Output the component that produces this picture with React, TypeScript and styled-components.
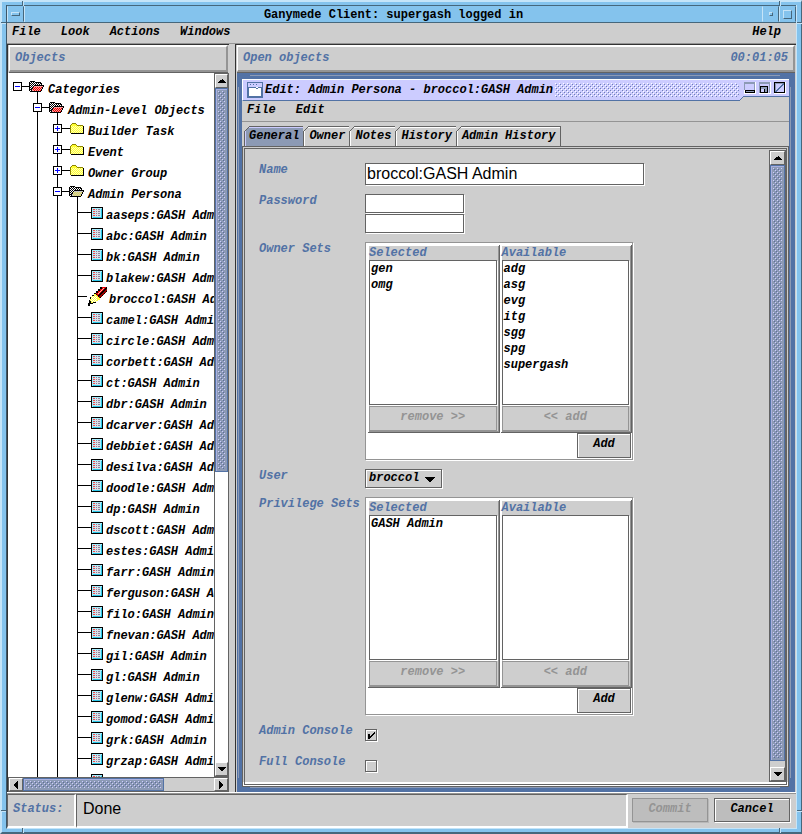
import React, { useState } from "react";
import styled, { createGlobalStyle, css } from "styled-components";

const C = {
  gray: "#cecece",
  mid: "#949494",
  dark: "#636363",
  blue: "#5272a5",
  steel: "#8c9ab5",
  lavender: "#ccccff",
  sky: "#84c3ed",
  skyLight: "#c5e4f8",
  skyDark: "#46677c",
};

const Global = createGlobalStyle`
  *, *::before, *::after { box-sizing: border-box; }
  html, body { margin: 0; background: ${C.gray}; }
  body, button, select, input {
    font: italic bold 12px/15px "Liberation Mono", "Courier New", monospace;
    color: #000;
  }
  button, select, input { margin: 0; padding: 0; border-radius: 0; outline-offset: -2px; }
  ul { list-style: none; margin: 0; padding: 0; }
  svg { display: block; flex: none; shape-rendering: crispEdges; }
`;

const bumps = (base: string, light: string, dark: string) => css`
  background:
    conic-gradient(at 1px 1px, transparent 75%, ${light} 0) 0 0 / 4px 4px,
    conic-gradient(at 1px 1px, transparent 75%, ${light} 0) 2px 2px / 4px 4px,
    conic-gradient(at 1px 1px, transparent 75%, ${dark} 0) 1px 1px / 4px 4px,
    conic-gradient(at 1px 1px, transparent 75%, ${dark} 0) 3px 3px / 4px 4px,
    ${base};
`;

/* ---------- desktop window ---------- */

const Shell = styled.div`
  position: relative;
  display: flex;
  flex-direction: column;
  height: 100vh;
  min-height: 400px;
  padding: 3px 4px 3px 4px;
  border: 2px solid;
  border-color: ${C.skyLight} ${C.skyDark} ${C.skyDark} ${C.skyLight};
  border-right-width: 1px;
  background: ${C.sky};
`;

const Notch = styled.i<{ $side: "top" | "bottom" | "left" | "right"; $end?: boolean }>`
  position: absolute;
  background: ${C.skyDark};
  ${(p) =>
    p.$side === "top" || p.$side === "bottom"
      ? css`
          width: 2px;
          height: 5px;
          border-right: 1px solid ${C.skyLight};
          ${p.$side}: -1px;
          ${p.$end ? "right: 20px" : "left: 20px"};
        `
      : css`
          width: 5px;
          height: 2px;
          border-bottom: 1px solid ${C.skyLight};
          ${p.$side}: -1px;
          ${p.$end ? "bottom: 20px" : "top: 20px"};
        `}
`;

const Client = styled.div`
  display: flex;
  flex-direction: column;
  flex: 1;
  min-height: 0;
  border: 1px solid;
  border-top: 0;
  border-color: ${C.skyDark} ${C.skyLight} ${C.skyLight} #3d5668;
  background: ${C.gray};
`;

const WindowBar = styled.header`
  display: flex;
  align-items: stretch;
  height: 18px;
  border-top: 1px solid ${C.skyDark};
  border-bottom: 1px solid ${C.skyDark};
  background: ${C.sky};
`;

const WindowTitle = styled.h1`
  flex: 1;
  margin: 0;
  text-align: center;
  font: bold 12px/18px "Liberation Mono", "Courier New", monospace;
  border-left: 1px solid ${C.skyLight};
  white-space: nowrap;
  overflow: hidden;
`;

const BarButton = styled.button`
  width: 17px;
  border: 1px solid;
  border-color: ${C.sky} ${C.skyDark} ${C.sky} ${C.skyLight};
  background: ${C.sky};
  display: flex;
  align-items: center;
  justify-content: center;
`;

const Glyph = styled.i<{ $w: number; $h: number }>`
  width: ${(p) => p.$w}px;
  height: ${(p) => p.$h}px;
  border: 1px solid;
  border-color: ${C.skyLight} ${C.skyDark} ${C.skyDark} ${C.skyLight};
`;

/* ---------- menus ---------- */

const MenuBar = styled.nav`
  display: flex;
  height: 21px;
  padding-right: 5px;
  border-bottom: 1px solid ${C.mid};
  background: ${C.gray};
`;

const MenuItem = styled.button<{ $push?: boolean }>`
  padding: 1px 10px 3px;
  border: 0;
  background: none;
  ${(p) => p.$push && "margin-left: auto;"}
  &:first-child { padding-left: 5px; }
`;

/* ---------- panels ---------- */

const Main = styled.main`
  display: grid;
  grid-template-columns: minmax(160px, 222px) 6px minmax(0, 1fr);
  flex: 1;
  min-height: 0;
  border-bottom: 1px solid #fff;
`;

const Pane = styled.section`
  display: flex;
  flex-direction: column;
  min-width: 0;
  min-height: 0;
  border-top: 1px solid #333;
  border-left: 1px solid #333;
`;

const PaneHead = styled.header`
  display: flex;
  justify-content: space-between;
  margin: 0 1px 1px;
  height: 27px;
  padding: 4px 5px;
  border: 2px solid;
  border-color: #fff ${C.mid} ${C.mid} #fff;
  border-left-width: 1px;
  box-shadow: 0 1px 0 ${C.dark};
  color: ${C.blue};
`;

const PaneTitle = styled.h2`
  margin: 0;
  font: inherit;
`;

const TreeArea = styled.div`
  display: grid;
  grid-template: minmax(0, 1fr) 15px / minmax(0, 1fr) 15px;
  flex: 1;
  min-height: 0;
  background: #fff;
`;

/* ---------- scroll bars ---------- */

const BarTrack = styled.div<{ $across?: boolean }>`
  display: flex;
  flex-direction: ${(p) => (p.$across ? "row" : "column")};
  ${(p) => p.$across && "grid-column: 1 / -1;"}
  min-height: 0;
  border: 1px solid ${C.dark};
  background: ${C.gray};
`;

const Arrow = styled.button<{ $across?: boolean }>`
  display: flex;
  align-items: center;
  justify-content: center;
  align-self: stretch;
  flex: 0 0 14px;
  border: 1px solid;
  border-color: #fff ${C.dark} ${C.dark} #fff;
  background: ${C.gray};
`;

const Groove = styled.div<{ $across?: boolean; $white?: boolean }>`
  flex: 1;
  min-height: 0;
  display: flex;
  flex-direction: ${(p) => (p.$across ? "row" : "column")};
  background: ${(p) => (p.$white ? "#fff" : C.gray)};
`;

const Thumb = styled.div<{ $size: number }>`
  flex: 0 0 ${(p) => p.$size}%;
  border: 1px solid ${C.blue};
  padding: 2px;
  background: ${C.steel};
  box-shadow: inset 1px 1px 0 #a9b0e0;
  display: flex;
  &::before {
    content: "";
    flex: 1;
    ${bumps(C.steel, "#ccccff", "#5c6c9c")}
  }
`;

const arrows: Record<string, string> = {
  up: "M4 2h1v1h1v1h1v1h1v1H0V5h1V4h1V3h2z",
  down: "M0 2h8v1H7v1H6v1H5v1H3V5H2V4H1V3H0z",
  left: "M6 0v8H5V7H4V6H3V5H2V3h1V2h1V1h1V0z",
  right: "M2 0v8h1V7h1V6h1V5h1V3H5V2H4V1H3V0z",
};

function ScrollBar(props: { across?: boolean; size: number; white?: boolean; label: string }) {
  const [a, b] = props.across ? ["left", "right"] : ["up", "down"];
  return (
    <BarTrack $across={props.across} role="group" aria-label={props.label}>
      <Arrow aria-label={"Scroll " + a}>
        <svg width="8" height="8" viewBox="0 0 8 8"><path d={arrows[a]} /></svg>
      </Arrow>
      <Groove $across={props.across} $white={props.white}>
        <Thumb $size={props.size} />
      </Groove>
      <Arrow aria-label={"Scroll " + b}>
        <svg width="8" height="8" viewBox="0 0 8 8"><path d={arrows[b]} /></svg>
      </Arrow>
    </BarTrack>
  );
}

/* ---------- tree ---------- */

const Tree = styled.ul`
  min-width: 0;
  overflow: hidden;
  padding: 4px 0 0 5px;
`;

const TreeRow = styled.li`
  display: flex;
  height: 21px;
  white-space: nowrap;
`;

const Toggle = styled.button`
  border: 0;
  background: none;
  flex: none;
`;

const TreeLabel = styled.span<{ $gap: number }>`
  padding: 6px 0 0 ${(p) => p.$gap}px;
`;

type Kind = "red" | "open" | "closed" | "leaf" | "edit";
interface Node { depth: number; kind: Kind; label: string; open?: boolean }

const people =
  "aaseps abc bk blakew broccol camel circle corbett ct dbr dcarver debbiet desilva doodle dp dscott estes farr ferguson filo fnevan gil gl glenw gomod grk grzap".split(" ");

const nodes: Node[] = [
  { depth: 0, kind: "red", label: "Categories", open: true },
  { depth: 1, kind: "red", label: "Admin-Level Objects", open: true },
  { depth: 2, kind: "closed", label: "Builder Task" },
  { depth: 2, kind: "closed", label: "Event" },
  { depth: 2, kind: "closed", label: "Owner Group" },
  { depth: 2, kind: "open", label: "Admin Persona", open: true },
  ...people.map((p): Node => ({
    depth: 3,
    kind: p === "broccol" ? "edit" : "leaf",
    label: p + ":GASH Admin",
  })),
  { depth: 3, kind: "leaf", label: "" },
];

function Dots({ x, y, w, h, fill }: { x: number; y: number; w: number; h: number; fill: string }) {
  let d = "";
  for (let r = 0; r < h; r++)
    for (let c = 0; c < w; c++) if ((r + c) % 2 === 0) d += `M${x + c} ${y + r}h1v1h-1z`;
  return <path d={d} fill={fill} />;
}

function OpenFolder({ color, light }: { color: string; light: string }) {
  return (
    <svg width="16" height="21" viewBox="0 0 16 21">
      <path d="M8 15h1v6H8z" />
      <path d="M1 5h1V4h4v1h1v1h5v3H1z" fill="#fff" />
      <Dots x={0} y={5} w={12} h={9} fill="#000" />
      <path d="M1 4h5v1H1zM0 5h1v9H0zM6 5h6v1H6zM12 6h1v3h-1z" />
      <path d="M5 9h10v1h-1v2h-1v2h-1v1H2v-1h1v-2h1v-2h1z" fill={light} />
      <Dots x={4} y={10} w={9} h={4} fill={color} />
      <path d="M5 8h10v1H5zM4 9h1v1H4zM3 10h1v2H3zM2 12h1v2H2zM1 14h11v1H1zM14 9h1v1h-1zM13 10h1v2h-1zM12 12h1v2h-1z" />
    </svg>
  );
}

function ClosedFolder() {
  return (
    <svg width="16" height="21" viewBox="0 0 16 21">
      <path d="M0 9h2v1H0z" />
      <path d="M2 5h1V4h4v1h1v1h6v8H2z" fill="#ffff31" />
      <Dots x={2} y={7} w={12} h={7} fill="#ffffb5" />
      <path d="M3 4h4v1H3zM2 5h1v1H2zM7 5h1v1H7zM1 6h1v8H1zM8 6h6v1H8z" fill="#8c8400" />
      <path d="M2 14h13v1H2zM14 7h1v8h-1z" />
    </svg>
  );
}

function Leaf() {
  return (
    <svg width="12" height="21" viewBox="0 0 12 21">
      <path d="M0 4h12v12H0z" />
      <path d="M1 5h10v10H1z" fill="#a5efff" />
      <path d="M2 14h9v1H2zM10 6h1v9h-1z" fill="#29c6e7" />
      <path d="M4 6h5v8H4z" fill="#dedee7" />
      <path d="M2 6h2v1H2zM2 8h2v1H2zM2 10h2v1H2zM2 12h2v1H2z" fill="#ff4242" />
      <path
        d="M5 6h1v1H5zM7 6h2v1H7zM5 8h1v1H5zM7 8h2v1H7zM5 10h1v1H5zM7 10h2v1H7zM5 12h1v1H5zM7 12h2v1H7z"
        fill="#8c849c"
      />
    </svg>
  );
}

function Pencil() {
  return (
    <svg width="21" height="21" viewBox="0 0 21 21">
      <path d="M0 19h1v-3h1v-3h1v-3h2V8h2V6h2V4h2V2h2V0h7v5h-2v2h-2v2h-2v2h-2v2h-2v2H9v1H6v1H3v2z" />
      <path d="M5 9h2V7h2v1h2v2h2v3h-2v1H9v1H6v1H4v-2H3v-2h1v-2h1z" fill="#ffff42" />
      <Dots x={4} y={9} w={6} h={6} fill="#fff" />
      <path d="M9 6h2V4h2V2h2V0h4v1h-1v1h-1v1h-1v1h-1v1h-1v1h-1v1h-1v1h-1v1h-1V7H9z" fill="#e70000" />
      <path d="M12 9h1V8h1V7h1V6h1V5h1V4h1V3h1V2h1v2h-1v2h-2v2h-2v2h-2v1h-1z" fill="#940000" />
      <path d="M11 6h1V5h1V4h1V3h1V2h1V1h1v1h-1v1h-1v1h-1v1h-1v1h-1v1h-1z" fill="#ffb5b5" />
    </svg>
  );
}

function TreeIcon({ kind }: { kind: Kind }) {
  if (kind === "red") return <OpenFolder color="#e70000" light="#ff9c9c" />;
  if (kind === "open") return <OpenFolder color="#e7de4a" light="#c6c6c6" />;
  if (kind === "closed") return <ClosedFolder />;
  if (kind === "edit") return <Pencil />;
  return <Leaf />;
}

function Row({ node }: { node: Node }) {
  const leaf = node.depth === 3;
  const w = node.kind === "edit" ? 14 : leaf ? 18 : 16;
  const cell = (
    <svg width={w} height="21" viewBox={`0 0 ${w} 21`}>
      {node.depth > 0 && <path d="M4 0h1v21H4z" />}
      <path d={`M4 9h${w - 4}v1H4z`} />
      {!leaf && (
        <>
          <path d="M0 5h9v9H0z" />
          <path d="M1 6h7v7H1z" fill="#fff" />
          <path d={node.open ? "M2 9h5v1H2z" : "M2 9h5v1H2zM4 7h1v5H4z"} fill="#00f" />
        </>
      )}
    </svg>
  );
  return (
    <TreeRow>
      {Array.from({ length: node.depth }, (_, k) => (
        <svg key={k} width="20" height="21" viewBox="0 0 20 21">{k > 0 && <path d="M4 0h1v21H4z" />}</svg>
      ))}
      {leaf ? cell : <Toggle aria-label={(node.open ? "Collapse " : "Expand ") + node.label}>{cell}</Toggle>}
      <TreeIcon kind={node.kind} />
      <TreeLabel $gap={node.kind === "edit" ? 1 : 3}>{node.label}</TreeLabel>
    </TreeRow>
  );
}

/* ---------- internal frame ---------- */

const Frame = styled.article`
  display: flex;
  flex-direction: column;
  flex: 1;
  min-height: 0;
  margin: 0 1px;
  padding: 6px 6px 5px 5px;
  background:
    linear-gradient(${C.steel} 0 0) 13px 2px / calc(100% - 28px) 1px no-repeat,
    linear-gradient(${C.steel} 0 0) 13px calc(100% - 4px) / calc(100% - 28px) 1px no-repeat,
    linear-gradient(${C.steel} 0 0) 1px 14px / 1px calc(100% - 28px) no-repeat,
    linear-gradient(${C.steel} 0 0) calc(100% - 4px) 14px / 1px calc(100% - 28px) no-repeat,
    ${C.blue};
`;

const FrameBar = styled.header`
  display: flex;
  align-items: flex-start;
  height: 22px;
  background: ${C.gray};
`;

const FrameTitle = styled.div`
  display: flex;
  align-items: center;
  flex: 1;
  min-width: 0;
  height: 22px;
  padding: 0 0 1px 4px;
  gap: 2px;
  border: solid #fff;
  border-width: 1px 0 1px 1px;
  border-bottom-color: ${C.blue};
  background: ${C.lavender};
`;

const FrameName = styled.h2`
  margin: 0;
  padding-top: 1px;
  font: inherit;
  white-space: nowrap;
`;

const TitleBumps = styled.div`
  flex: 1;
  height: 14px;
  ${bumps(C.lavender, "#fff", "#6f7fb5")}
`;

const FrameTools = styled.div`
  display: flex;
  gap: 3px;
  height: 18px;
  padding: 2px 3px 0 0;
  border-top: 1px solid #fff;
  border-bottom: 1px solid ${C.blue};
  background: ${C.lavender};
`;

const ToolButton = styled.button`
  width: 12px;
  height: 12px;
  border: 0;
  background: none;
`;

const TabRow = styled.div`
  display: flex;
  padding: 4px 0 0 2px;
  background: ${C.gray};
`;

const Tab = styled.button<{ $on?: boolean }>`
  position: relative;
  height: 20px;
  padding: 0 4px 1px 4px;
  border: 1px solid ${C.dark};
  border-bottom: 0;
  & + & { border-left: 0; padding-left: 5px; }
  background: ${(p) => (p.$on ? C.steel : C.gray)};
  box-shadow: inset 1px 1px 0 ${(p) => (p.$on ? C.lavender : "#fff")};
  white-space: nowrap;
  &::before {
    content: "";
    position: absolute;
    left: -1px;
    top: -1px;
    width: 6px;
    height: 6px;
    background: linear-gradient(135deg, ${C.gray} 42%, ${C.dark} 42% 56%, transparent 56%);
  }
`;

const Body = styled.div`
  display: grid;
  grid-template-columns: minmax(0, 1fr) 17px;
  flex: 1;
  min-height: 0;
  border: 1px solid ${C.dark};
  outline: 1px solid ${C.dark};
  outline-offset: -3px;
  box-shadow: inset 0 -4px 0 #fff;
  padding: 3px 2px 4px 3px;
  background: ${C.gray};
`;

const Form = styled.form`
  display: flex;
  flex-direction: column;
  gap: 9px;
  min-width: 0;
  overflow: hidden;
  padding: 13px 0 0 13px;
`;

const Field = styled.div`
  display: grid;
  grid-template-columns: 106px minmax(0, 1fr);
  align-items: start;
`;

const Caption = styled.label`
  color: ${C.blue};
  white-space: nowrap;
`;

const sunk = css`
  border: 1px solid ${C.dark};
  box-shadow: 1px 1px 0 #fff;
`;

const TextBox = styled.input`
  ${sunk}
  width: 279px;
  max-width: 100%;
  height: 22px;
  padding: 0 1px;
  background: #fff;
  font: 16px/20px "Liberation Sans", Arial, sans-serif;
`;

const SecretBox = styled(TextBox)`
  display: block;
  width: 99px;
  height: 19px;
  & + & { margin-top: 1px; }
`;

const PickWrap = styled.div`
  position: relative;
  width: 77px;
  height: 19px;
`;

const Pick = styled.select`
  ${sunk}
  appearance: none;
  width: 100%;
  height: 100%;
  padding: 0 0 1px 3px;
  background: ${C.gray};
  box-shadow: inset 1px 1px 0 #fff, 1px 1px 0 #fff;
`;

const PickArrow = styled.svg`
  position: absolute;
  right: 7px;
  top: 8px;
  pointer-events: none;
`;

const TickWrap = styled.div`
  position: relative;
  width: 12px;
  height: 22px;
  padding-top: 5px;
`;

const Tick = styled.input`
  ${sunk}
  appearance: none;
  display: block;
  width: 12px;
  height: 12px;
  background: ${C.gray};
  box-shadow: inset 1px 1px 0 #fff, 1px 1px 0 #fff;
`;

const TickMark = styled.svg`
  position: absolute;
  left: 3px;
  top: 8px;
  pointer-events: none;
`;

/* ---------- shuttle ---------- */

const Shuttle = styled.div`
  width: 268px;
  max-width: 100%;
  padding: 2px 0 0 2px;
  border: 1px solid ${C.mid};
  box-shadow: 1px 1px 0 #fff;
  background: #fff;
`;

const ShuttleColumns = styled.div`
  display: grid;
  grid-template-columns: repeat(2, minmax(0, 1fr));
  gap: 1px;
`;

const Column = styled.section`
  display: flex;
  flex-direction: column;
  padding: 1px;
  border-right: 1px solid ${C.dark};
  border-bottom: 1px solid ${C.dark};
  background: ${C.gray};
  box-shadow: inset 1px 1px 0 #fff, inset -1px -1px 0 ${C.mid};
`;

const ColumnTitle = styled.h3`
  margin: 0;
  height: 14px;
  font: inherit;
  line-height: 14px;
  color: ${C.blue};
`;

const Items = styled.ul`
  ${sunk}
  height: 145px;
  margin-right: 1px;
  padding-left: 1px;
  background: #fff;
  line-height: 16px;
`;

const MoveButton = styled.button`
  height: 25px;
  margin: 1px 1px 0 0;
  padding-bottom: 2px;
  border: 1px solid ${C.mid};
  outline: 1px solid ${C.mid};
  outline-offset: -1px;
  background: ${C.gray};
  &:disabled { color: ${C.mid}; }
`;

const ShuttleFoot = styled.div`
  display: flex;
  height: 26px;
  padding-right: 1px;
`;

const Entry = styled.input`
  flex: 1;
  min-width: 0;
  border: 0;
  background: #fff;
`;

const PushButton = styled.button`
  width: 54px;
  height: 25px;
  padding-bottom: 3px;
  border: 1px solid ${C.dark};
  background: ${C.gray};
  box-shadow: inset 1px 1px 0 #fff;
`;

function DualList(props: { name: string; selected: string[]; available: string[] }) {
  return (
    <Shuttle role="group" aria-label={props.name}>
      <ShuttleColumns>
        <Column>
          <ColumnTitle>Selected</ColumnTitle>
          <Items>{props.selected.map((s) => <li key={s}>{s}</li>)}</Items>
          <MoveButton type="button" disabled>{"remove >>"}</MoveButton>
        </Column>
        <Column>
          <ColumnTitle>Available</ColumnTitle>
          <Items>{props.available.map((s) => <li key={s}>{s}</li>)}</Items>
          <MoveButton type="button" disabled>{"<< add"}</MoveButton>
        </Column>
      </ShuttleColumns>
      <ShuttleFoot>
        <Entry aria-label={"New entry for " + props.name} />
        <PushButton type="button">Add</PushButton>
      </ShuttleFoot>
    </Shuttle>
  );
}

function TickField({ id, label, initial }: { id: string; label: string; initial: boolean }) {
  const [on, setOn] = useState(initial);
  return (
    <Field>
      <Caption htmlFor={id}>{label}</Caption>
      <TickWrap>
        <Tick id={id} type="checkbox" checked={on} onChange={() => setOn(!on)} />
        {on && (
          <TickMark width="8" height="8" viewBox="0 0 8 8">
            <path d="M6 0h1v2H6v1H5v1H4v1H3v1H2v1H0V2h2v2h1V3h1V2h1V1h1z" />
          </TickMark>
        )}
      </TickWrap>
    </Field>
  );
}

/* ---------- status bar ---------- */

const StatusBar = styled.footer`
  display: flex;
  height: 35px;
  border-top: 1px solid ${C.mid};
`;

const StatusName = styled.div`
  width: 69px;
  padding: 7px 5px;
  border: 1px solid;
  border-color: ${C.dark} #fff #fff ${C.dark};
  border-right-width: 2px;
  border-bottom-width: 2px;
  color: ${C.blue};
`;

const StatusText = styled.output`
  flex: 1;
  min-width: 0;
  padding: 4px 6px;
  border: 1px solid;
  border-color: ${C.dark} #fff #fff ${C.dark};
  border-right-width: 2px;
  border-bottom-width: 2px;
  font: 16px/20px "Liberation Sans", Arial, sans-serif;
`;

const Actions = styled.div`
  display: flex;
  align-items: center;
  gap: 6px;
  padding: 0 6px 2px 4px;
`;

const ActionButton = styled.button`
  ${sunk}
  width: 76px;
  height: 24px;
  padding-bottom: 2px;
  background: #bdbdbd;
  box-shadow: inset 1px 1px 0 #fff, 1px 1px 0 #fff;
  &:disabled { color: ${C.mid}; border-color: ${C.mid}; box-shadow: 1px 1px 0 #b8b8b8; }
`;

export default function App() {
  return (
    <>
      <Global />
      <Shell>
        <Client>
          <WindowBar>
            <BarButton aria-label="Window menu"><Glyph $w={9} $h={4} /></BarButton>
            <WindowTitle>Ganymede Client: supergash logged in</WindowTitle>
            <BarButton aria-label="Minimize"><Glyph $w={4} $h={4} /></BarButton>
            <BarButton aria-label="Maximize"><Glyph $w={9} $h={9} /></BarButton>
          </WindowBar>
          <MenuBar>
            <MenuItem>File</MenuItem>
            <MenuItem>Look</MenuItem>
            <MenuItem>Actions</MenuItem>
            <MenuItem>Windows</MenuItem>
            <MenuItem $push>Help</MenuItem>
          </MenuBar>
          <Main>
            <Pane>
              <PaneHead><PaneTitle>Objects</PaneTitle></PaneHead>
              <TreeArea>
                <Tree aria-label="Objects">
                  {nodes.map((n, i) => <Row key={i} node={n} />)}
                </Tree>
                <ScrollBar size={57} white label="Tree vertical scroll" />
                <ScrollBar across size={74} label="Tree horizontal scroll" />
              </TreeArea>
            </Pane>
            <span />
            <Pane>
              <PaneHead>
                <PaneTitle>Open objects</PaneTitle>
                <span>00:01:05</span>
              </PaneHead>
              <Frame>
                <FrameBar>
                  <FrameTitle>
                    <svg width="16" height="16" viewBox="0 0 16 16">
                      <path d="M0 0h16v16H0z" fill={C.blue} />
                      <path d="M1 1h14v4H1z" fill={C.lavender} />
                      <path d="M2 5h12v9H2z" fill="#fff" />
                      <path d="M3 2h1v1H3zM6 2h1v1H6zM9 2h1v1H9zM2 5h7v1H2zM9 6h2v1H9zM11 5h3v1h-3z" fill={C.blue} />
                    </svg>
                    <FrameName>Edit: Admin Persona - broccol:GASH Admin</FrameName>
                    <TitleBumps />
                  </FrameTitle>
                  <svg width="5" height="22" viewBox="0 0 5 22">
                    <path d="M0 0h5v18H4v1H3v1H2v1H0z" fill={C.lavender} />
                    <path d="M0 0h5v1H0z" fill="#fff" />
                    <path d="M0 21h1v-1h1v-1h1v-1h1v-1h1v1H4v1H3v1H2v1H1v1H0z" fill={C.blue} />
                  </svg>
                  <FrameTools>
                    <ToolButton aria-label="Iconify">
                      <svg width="12" height="12" viewBox="0 0 12 12">
                        <path d="M0 0h12v12H0z" fill="#fff" />
                        <path d="M0 0h11v8H0z" fill={C.steel} />
                        <path d="M1 2h9v6H1z" fill={C.lavender} />
                        <path d="M1 8h10v3H1z" />
                        <path d="M2 9h8v1H2z" fill={C.steel} />
                      </svg>
                    </ToolButton>
                    <ToolButton aria-label="Zoom">
                      <svg width="12" height="12" viewBox="0 0 12 12">
                        <path d="M0 0h12v12H0z" fill="#fff" />
                        <path d="M0 0h11v11H0z" fill={C.steel} />
                        <path d="M1 2h9v9H1z" fill={C.lavender} />
                        <path d="M1 4h8v7H1z" />
                        <path d="M2 5h6v5H2z" fill={C.steel} />
                        <path d="M2 7h4v3H2z" fill={C.lavender} />
                        <path d="M5 7h1v3H5z" />
                      </svg>
                    </ToolButton>
                    <ToolButton aria-label="Close">
                      <svg width="12" height="12" viewBox="0 0 12 12">
                        <path d="M0 0h12v12H0z" fill="#fff" />
                        <path d="M0 0h11v11H0z" />
                        <path d="M1 1h9v9H1z" fill={C.lavender} />
                        <path d="M1 1h9v1H1zM1 1h1v9H1z" fill={C.steel} />
                        <path d="M1 9h1V8h1V7h1V6h1V5h1V4h1V3h1V2h1V1h1v2H9v1H8v1H7v1H6v1H5v1H4v1H3v1H1z" fill={C.blue} />
                      </svg>
                    </ToolButton>
                  </FrameTools>
                </FrameBar>
                <MenuBar>
                  <MenuItem>File</MenuItem>
                  <MenuItem>Edit</MenuItem>
                </MenuBar>
                <TabRow role="tablist">
                  {["General", "Owner", "Notes", "History", "Admin History"].map((t, i) => (
                    <Tab key={t} role="tab" aria-selected={i === 0} $on={i === 0}>{t}</Tab>
                  ))}
                </TabRow>
                <Body>
                  <Form onSubmit={(e) => e.preventDefault()}>
                    <Field>
                      <Caption htmlFor="name">Name</Caption>
                      <TextBox id="name" defaultValue="broccol:GASH Admin" />
                    </Field>
                    <Field>
                      <Caption htmlFor="pw">Password</Caption>
                      <div>
                        <SecretBox id="pw" type="password" />
                        <SecretBox type="password" aria-label="Confirm password" />
                      </div>
                    </Field>
                    <Field>
                      <Caption as="span">Owner Sets</Caption>
                      <DualList
                        name="Owner Sets"
                        selected={["gen", "omg"]}
                        available={["adg", "asg", "evg", "itg", "sgg", "spg", "supergash"]}
                      />
                    </Field>
                    <Field>
                      <Caption htmlFor="user">User</Caption>
                      <PickWrap>
                        <Pick id="user"><option>broccol</option></Pick>
                        <PickArrow width="10" height="5" viewBox="0 0 10 5">
                          <path d="M0 0h10v1H9v1H8v1H7v1H6v1H4V4H3V3H2V2H1V1H0z" />
                        </PickArrow>
                      </PickWrap>
                    </Field>
                    <Field>
                      <Caption as="span">Privilege Sets</Caption>
                      <DualList name="Privilege Sets" selected={["GASH Admin"]} available={[]} />
                    </Field>
                    <TickField id="admin" label="Admin Console" initial />
                    <TickField id="full" label="Full Console" initial={false} />
                  </Form>
                  <ScrollBar size={99} label="Form scroll" />
                </Body>
              </Frame>
            </Pane>
          </Main>
          <StatusBar>
            <StatusName>Status:</StatusName>
            <StatusText>Done</StatusText>
            <Actions>
              <ActionButton disabled>Commit</ActionButton>
              <ActionButton>Cancel</ActionButton>
            </Actions>
          </StatusBar>
        </Client>
        <Notch $side="top" /><Notch $side="top" $end />
        <Notch $side="bottom" /><Notch $side="bottom" $end />
        <Notch $side="left" /><Notch $side="left" $end />
        <Notch $side="right" /><Notch $side="right" $end />
      </Shell>
    </>
  );
}
